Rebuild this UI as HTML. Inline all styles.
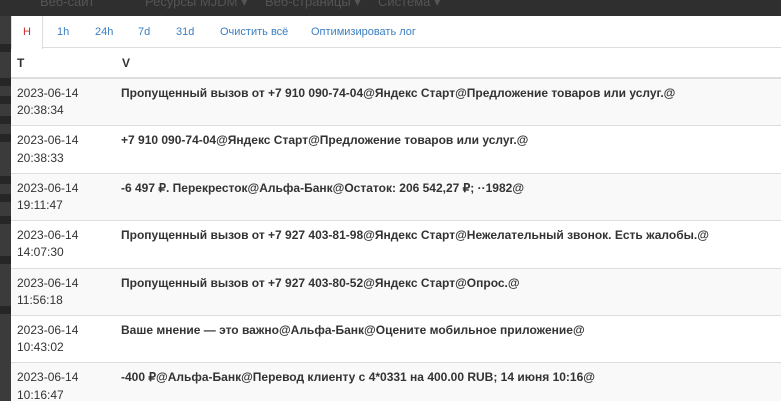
<!DOCTYPE html>
<html><head><meta charset="utf-8"><style>
*{margin:0;padding:0;box-sizing:border-box}
body{width:781px;height:401px;overflow:hidden;background:#3a3a3a;font-family:"Liberation Sans",Arial,sans-serif;position:relative}
.nav{position:absolute;left:0;top:0;width:781px;height:16px;background:#2f2f2f;color:#555;font-size:13px;overflow:hidden}
.nav span{position:absolute;top:-6px}
.side{position:absolute;left:0;top:16px;width:11px;height:385px;background:#3b3b3b}
.side i{position:absolute;left:0;width:11px;height:8px;background:#262626}
.modal{position:absolute;left:11px;top:16px;width:770px;height:385px;background:#fff;overflow:hidden}
.tabs{position:relative;height:32px;border-bottom:1px solid #ddd;font-size:11px;color:#3a7fc1}
.tabs span{position:absolute;top:10px}
.tabs .act{position:absolute;left:0;top:0;width:32px;height:33px;background:#fff;border:1px solid #ddd;border-bottom:none;border-top:none;color:#c9302c;text-align:center;padding-top:10px;left:0}
table{border-collapse:collapse;width:100%;font-size:12px;color:#333}
th{text-align:left;font-weight:bold;padding:0 6px;height:30px;border-bottom:2px solid #ddd;font-size:12px}
td{padding:6px 6px;line-height:17.2px;vertical-align:top;border-top:1px solid #ddd}
td.v{font-weight:bold;padding-left:5px}
tr.s td{background:#f9f9f9}
</style></head><body>
<div class="nav"><span style="left:40px">Веб-сайт</span><span style="left:145px">Ресурсы MJDM ▾</span><span style="left:265px">Веб-страницы ▾</span><span style="left:378px">Система ▾</span></div>
<div class="side"><i style="top:28px"></i><i style="top:62px"></i><i style="top:80px"></i><i style="top:100px"></i><i style="top:118px"></i><i style="top:160px"></i><i style="top:178px"></i><i style="top:200px"></i><i style="top:240px"></i><i style="top:290px"></i></div>
<div class="modal">
<div class="tabs"><div class="act">H</div><span style="left:46px">1h</span><span style="left:84px">24h</span><span style="left:127px">7d</span><span style="left:165px">31d</span><span style="left:209px">Очистить всё</span><span style="left:300px">Оптимизировать лог</span></div>
<table>
<tr><th style="width:105px">T</th><th>V</th></tr>
<tr class="s"><td>2023-06-14<br>20:38:34</td><td class="v">Пропущенный вызов от +7 910 090-74-04@Яндекс Старт@Предложение товаров или услуг.@</td></tr>
<tr><td>2023-06-14<br>20:38:33</td><td class="v">+7 910 090-74-04@Яндекс Старт@Предложение товаров или услуг.@</td></tr>
<tr class="s"><td>2023-06-14<br>19:11:47</td><td class="v">-6 497 ₽. Перекресток@Альфа-Банк@Остаток: 206 542,27 ₽; ··1982@</td></tr>
<tr><td>2023-06-14<br>14:07:30</td><td class="v">Пропущенный вызов от +7 927 403-81-98@Яндекс Старт@Нежелательный звонок. Есть жалобы.@</td></tr>
<tr class="s"><td>2023-06-14<br>11:56:18</td><td class="v">Пропущенный вызов от +7 927 403-80-52@Яндекс Старт@Опрос.@</td></tr>
<tr><td>2023-06-14<br>10:43:02</td><td class="v">Ваше мнение — это важно@Альфа-Банк@Оцените мобильное приложение@</td></tr>
<tr class="s"><td>2023-06-14<br>10:16:47</td><td class="v">-400 ₽@Альфа-Банк@Перевод клиенту с 4*0331 на 400.00 RUB; 14 июня 10:16@</td></tr>
</table>
</div>
</body></html>
